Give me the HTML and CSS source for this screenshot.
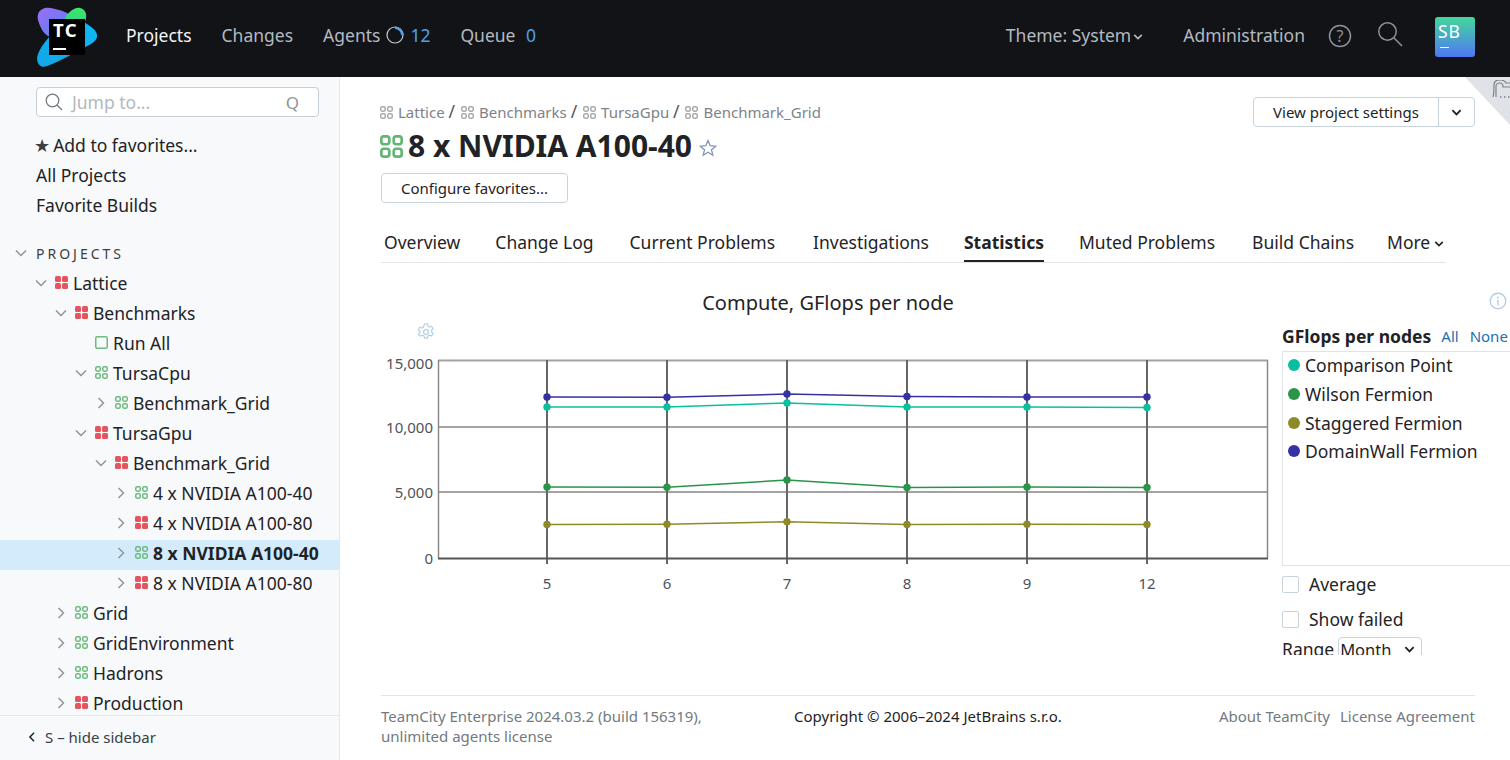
FILE: index.html
```html
<!DOCTYPE html>
<html lang="en">
<head>
  <meta charset="UTF-8">
  <title>8 x NVIDIA A100-40 - Statistics</title>
  <link rel="stylesheet" href="styles.css">
</head>
<body>
  <svg class="defs" width="0" height="0">
    <defs>
      <symbol id="grid-open" viewBox="0 0 13 13">
        <rect x="0.75" y="0.75" width="4.5" height="4.5" rx="1.4" fill="none" stroke="currentColor" stroke-width="1.5"/>
        <rect x="7.75" y="0.75" width="4.5" height="4.5" rx="1.4" fill="none" stroke="currentColor" stroke-width="1.5"/>
        <rect x="0.75" y="7.75" width="4.5" height="4.5" rx="1.4" fill="none" stroke="currentColor" stroke-width="1.5"/>
        <rect x="7.75" y="7.75" width="4.5" height="4.5" rx="1.4" fill="none" stroke="currentColor" stroke-width="1.5"/>
      </symbol>
      <symbol id="grid-fill" viewBox="0 0 13 13">
        <rect width="6" height="6" rx="1.5" fill="currentColor"/>
        <rect x="7" width="6" height="6" rx="1.5" fill="currentColor"/>
        <rect y="7" width="6" height="6" rx="1.5" fill="currentColor"/>
        <rect x="7" y="7" width="6" height="6" rx="1.5" fill="currentColor"/>
      </symbol>
      <symbol id="box-open" viewBox="0 0 13 13">
        <rect x="0.75" y="0.75" width="11.5" height="11.5" rx="1.5" fill="none" stroke="currentColor" stroke-width="1.5"/>
      </symbol>
      <symbol id="chev-down" viewBox="0 0 12 12">
        <path d="M1 3.5 6 8.5 11 3.5" fill="none" stroke="currentColor" stroke-width="1.4"/>
      </symbol>
      <symbol id="chev-right" viewBox="0 0 12 12">
        <path d="M3.5 1 8.5 6 3.5 11" fill="none" stroke="currentColor" stroke-width="1.4"/>
      </symbol>
      <symbol id="chev-bold" viewBox="0 0 12 12">
        <path d="M1.5 3.5 6 8 10.5 3.5" fill="none" stroke="currentColor" stroke-width="2"/>
      </symbol>
    </defs>
  </svg>

  <header class="topbar">
    <a class="logo">
      <svg width="60" height="60" viewBox="0 0 60 60">
        <defs>
          <linearGradient id="logo-purple" x1="0" y1="0" x2="1" y2="1">
            <stop offset="0" stop-color="#9f6bf5"/>
            <stop offset="1" stop-color="#3f8cf0"/>
          </linearGradient>
          <linearGradient id="logo-green" x1="0" y1="0" x2="0" y2="1">
            <stop offset="0" stop-color="#3bea62"/>
            <stop offset="1" stop-color="#2fc7a0"/>
          </linearGradient>
          <linearGradient id="logo-blue" x1="0" y1="1" x2="1" y2="0">
            <stop offset="0" stop-color="#12a6e8"/>
            <stop offset="1" stop-color="#0fb8f5"/>
          </linearGradient>
        </defs>
        <path d="M4 3C9-1 15 1 22 3c8 2 14 6 18 12 3 5 0 12-7 14-7 2-16 3-22 0C6 26 3 20 1 13 0 9 1 5 4 3Z" fill="url(#logo-purple)"/>
        <path d="M30 8c4-5 9-8 13-7 5 1 7 6 6 10-1 7-7 13-14 12-8-1-10-8-5-15Z" fill="url(#logo-green)"/>
        <path d="M10 59C3 62-2 55 1 47 5 37 14 27 26 17c7-6 16-6 24 0 6 4 11 8 10 13-1 4-5 7-10 9C37 46 24 54 10 59Z" fill="url(#logo-blue)"/>
        <rect x="12" y="12" width="36" height="36" fill="#000"/>
        <text x="16" y="29.5" class="logo-text">TC</text>
        <rect x="16" y="41" width="13" height="2" fill="#fff"/>
      </svg>
    </a>
    <nav class="nav-left">
      <a class="nav-link active">Projects</a>
      <a class="nav-link">Changes</a>
      <a class="nav-link agents">Agents
        <svg class="spinner" width="18" height="18" viewBox="0 0 18 18">
          <circle cx="9" cy="9" r="8" fill="none" stroke="#c7cdd3" stroke-width="1.2"/>
          <path d="M9 .5A8.5 8.5 0 0 1 17.5 9H15A6 6 0 0 0 9 3Z" fill="#4ea1ea"/>
        </svg>
        <span class="count">12</span></a>
      <a class="nav-link">Queue <span class="count queue-count">0</span></a>
    </nav>
    <nav class="nav-right">
      <a class="nav-link theme">Theme: System<svg width="10" height="10"><use href="#chev-bold"/></svg></a>
      <a class="nav-link admin">Administration</a>
      <svg class="help" width="24" height="24" viewBox="0 0 24 24">
        <circle cx="12" cy="12" r="10.5" fill="none" stroke="#8b9299" stroke-width="1.5"/>
        <text x="12" y="17.5" class="help-mark">?</text>
      </svg>
      <svg class="search" width="26" height="26" viewBox="0 0 26 26">
        <circle cx="10.5" cy="10.5" r="8.7" fill="none" stroke="#8b9299" stroke-width="1.5"/>
        <path d="M17 17 25 25" stroke="#8b9299" stroke-width="1.6"/>
      </svg>
      <div class="avatar">SB<i></i></div>
    </nav>
  </header>

  <div class="layout">
    <aside class="sidebar">
      <div class="jump">
        <svg width="18" height="18" viewBox="0 0 18 18">
          <circle cx="7.5" cy="7.5" r="6.3" fill="none" stroke="#737a80" stroke-width="1.3"/>
          <path d="M12 12 17 17" stroke="#737a80" stroke-width="1.3"/>
        </svg>
        <span class="jump-text">Jump to...</span>
        <span class="jump-key">Q</span>
      </div>

      <div class="fav-links">
        <a class="fav-star"><span class="star">★</span>Add to favorites...</a>
        <a>All Projects</a>
        <a>Favorite Builds</a>
      </div>

      <div class="tree-wrap">
        <div class="section-title">
          <svg class="chev" width="12" height="12"><use href="#chev-down"/></svg>
          PROJECTS
        </div>
        <ul class="tree">
          <li class="d0"><svg class="chev" width="12" height="12"><use href="#chev-down"/></svg><svg class="ico red" width="13" height="13"><use href="#grid-fill"/></svg>Lattice</li>
          <li class="d1"><svg class="chev" width="12" height="12"><use href="#chev-down"/></svg><svg class="ico red" width="13" height="13"><use href="#grid-fill"/></svg>Benchmarks</li>
          <li class="d2"><span class="chev-gap"></span><svg class="ico green" width="13" height="13"><use href="#box-open"/></svg>Run All</li>
          <li class="d2"><svg class="chev" width="12" height="12"><use href="#chev-down"/></svg><svg class="ico green" width="13" height="13"><use href="#grid-open"/></svg>TursaCpu</li>
          <li class="d3"><svg class="chev" width="12" height="12"><use href="#chev-right"/></svg><svg class="ico green" width="13" height="13"><use href="#grid-open"/></svg>Benchmark_Grid</li>
          <li class="d2"><svg class="chev" width="12" height="12"><use href="#chev-down"/></svg><svg class="ico red" width="13" height="13"><use href="#grid-fill"/></svg>TursaGpu</li>
          <li class="d3"><svg class="chev" width="12" height="12"><use href="#chev-down"/></svg><svg class="ico red" width="13" height="13"><use href="#grid-fill"/></svg>Benchmark_Grid</li>
          <li class="d4"><svg class="chev" width="12" height="12"><use href="#chev-right"/></svg><svg class="ico green" width="13" height="13"><use href="#grid-open"/></svg>4 x NVIDIA A100-40</li>
          <li class="d4"><svg class="chev" width="12" height="12"><use href="#chev-right"/></svg><svg class="ico red" width="13" height="13"><use href="#grid-fill"/></svg>4 x NVIDIA A100-80</li>
          <li class="d4 selected"><svg class="chev" width="12" height="12"><use href="#chev-right"/></svg><svg class="ico green" width="13" height="13"><use href="#grid-open"/></svg>8 x NVIDIA A100-40</li>
          <li class="d4"><svg class="chev" width="12" height="12"><use href="#chev-right"/></svg><svg class="ico red" width="13" height="13"><use href="#grid-fill"/></svg>8 x NVIDIA A100-80</li>
          <li class="d1"><svg class="chev" width="12" height="12"><use href="#chev-right"/></svg><svg class="ico green" width="13" height="13"><use href="#grid-open"/></svg>Grid</li>
          <li class="d1"><svg class="chev" width="12" height="12"><use href="#chev-right"/></svg><svg class="ico green" width="13" height="13"><use href="#grid-open"/></svg>GridEnvironment</li>
          <li class="d1"><svg class="chev" width="12" height="12"><use href="#chev-right"/></svg><svg class="ico green" width="13" height="13"><use href="#grid-open"/></svg>Hadrons</li>
          <li class="d1"><svg class="chev" width="12" height="12"><use href="#chev-right"/></svg><svg class="ico red" width="13" height="13"><use href="#grid-fill"/></svg>Production</li>
        </ul>
      </div>

      <div class="hide-sidebar">
        <svg width="10" height="10" viewBox="0 0 12 12"><path d="M8.5 1 3.5 6 8.5 11" fill="none" stroke="#1f2326" stroke-width="1.8"/></svg>
        S – hide sidebar
      </div>
    </aside>

    <main class="content">
      <div class="corner">
        <svg width="24" height="20" viewBox="0 0 24 20">
          <path d="M1 17C2 14 2 8 2 5 2 1 5 0 8 0c3 0 5 1 6 3h10M4 17V6c0-2 2-3 4-3 2 0 3 2 3 4h13" fill="none" stroke="#7d8389" stroke-width="1.2"/>
          <path d="M8 17h1.5M12 17h1.5M16 17h1.5" stroke="#7d8389" stroke-width="1.6"/>
        </svg>
      </div>

      <div class="head-row">
        <div class="crumbs">
          <svg class="crumb-ico" width="13" height="13"><use href="#grid-open"/></svg>Lattice <span class="sep">/</span>
          <svg class="crumb-ico" width="13" height="13"><use href="#grid-open"/></svg>Benchmarks <span class="sep">/</span>
          <svg class="crumb-ico" width="13" height="13"><use href="#grid-open"/></svg>TursaGpu <span class="sep">/</span>
          <svg class="crumb-ico" width="13" height="13"><use href="#grid-open"/></svg>Benchmark_Grid
        </div>
        <div class="split-btn">
          <button type="button" class="btn-main">View project settings</button>
          <button type="button" class="btn-arrow"><svg width="11" height="11"><use href="#chev-bold"/></svg></button>
        </div>
      </div>

      <h1 class="title">
        <svg class="title-ico" width="23" height="23"><use href="#grid-open"/></svg>
        8 x NVIDIA A100-40
        <svg class="title-star" width="18" height="18" viewBox="0 0 18 18">
          <path d="M9 1.6 11.2 6.7 16.7 7.2 12.5 10.8 13.8 16.2 9 13.3 4.2 16.2 5.5 10.8 1.3 7.2 6.8 6.7Z" fill="none" stroke="#7d94b8" stroke-width="1.3"/>
        </svg>
      </h1>

      <button type="button" class="btn-fav">Configure favorites...</button>

      <div class="tabs">
        <a>Overview</a>
        <a class="wide">Change Log</a>
        <a class="widest">Current Problems</a>
        <a>Investigations</a>
        <a class="on">Statistics</a>
        <a class="wider">Muted Problems</a>
        <a class="narrow">Build Chains</a>
        <a class="more">More<svg width="10" height="10"><use href="#chev-bold"/></svg></a>
      </div>

      <section class="stats">
        <div class="chart-col">
          <div class="chart-title">Compute, GFlops per node</div>
          <svg class="gear" width="18" height="18" viewBox="0 0 18 18">
            <path d="M7.5 1h3l.5 2.2 1.5.8 2.1-.8 1.5 2.6-1.6 1.5v1.6l1.6 1.5-1.5 2.6-2.1-.8-1.5.8-.5 2.2h-3l-.5-2.2-1.5-.8-2.100.8L1.300 11.400l1.600-1.500V8.300L1.300 6.800l1.500-2.600 2.100.8 1.500-.8Z" fill="none" stroke="#b4cfe8" stroke-width="1.2"/>
            <circle cx="9" cy="9" r="2.4" fill="none" stroke="#b4cfe8" stroke-width="1.2"/>
          </svg>
          <svg class="chart" width="890" height="250" viewBox="380 350 890 250">
            <g class="grid-h">
              <path d="M438 360.5H1268M438 427H1268M438 492H1268"/>
              <path d="M438.5 360V558M1267.5 360V558"/>
            </g>
            <g class="grid-v">
              <path d="M547 360V564M667 360V564M787 360V564M907 360V564M1027 360V564M1147 360V564"/>
            </g>
            <path class="axis" d="M438 558.5H1268"/>
            <g class="y-labels">
              <text x="433" y="368.5">15,000</text>
              <text x="433" y="433">10,000</text>
              <text x="433" y="498">5,000</text>
              <text x="433" y="563.5">0</text>
            </g>
            <g class="x-labels">
              <text x="547" y="588.5">5</text>
              <text x="667" y="588.5">6</text>
              <text x="787" y="588.5">7</text>
              <text x="907" y="588.5">8</text>
              <text x="1027" y="588.5">9</text>
              <text x="1147" y="588.5">12</text>
            </g>
            <g class="series" stroke="#0abf9f" fill="#0abf9f">
              <polyline points="547,407 667,407 787,403 907,407 1027,407 1147,407.5"/>
              <circle cx="547" cy="407" r="3.7"/><circle cx="667" cy="407" r="3.7"/><circle cx="787" cy="403" r="3.7"/><circle cx="907" cy="407" r="3.7"/><circle cx="1027" cy="407" r="3.7"/><circle cx="1147" cy="407.5" r="3.7"/>
            </g>
            <g class="series" stroke="#2a9548" fill="#2a9548">
              <polyline points="547,487 667,487.3 787,480 907,487.5 1027,487 1147,487.5"/>
              <circle cx="547" cy="487" r="3.7"/><circle cx="667" cy="487.3" r="3.7"/><circle cx="787" cy="480" r="3.7"/><circle cx="907" cy="487.5" r="3.7"/><circle cx="1027" cy="487" r="3.7"/><circle cx="1147" cy="487.5" r="3.7"/>
            </g>
            <g class="series" stroke="#8f8a28" fill="#8f8a28">
              <polyline points="547,524.5 667,524.3 787,521.7 907,524.5 1027,524.3 1147,524.5"/>
              <circle cx="547" cy="524.5" r="3.7"/><circle cx="667" cy="524.3" r="3.7"/><circle cx="787" cy="521.7" r="3.7"/><circle cx="907" cy="524.5" r="3.7"/><circle cx="1027" cy="524.3" r="3.7"/><circle cx="1147" cy="524.5" r="3.7"/>
            </g>
            <g class="series" stroke="#3630a5" fill="#3630a5">
              <polyline points="547,397 667,397.3 787,394 907,396.5 1027,397 1147,397"/>
              <circle cx="547" cy="397" r="3.7"/><circle cx="667" cy="397.3" r="3.7"/><circle cx="787" cy="394" r="3.7"/><circle cx="907" cy="396.5" r="3.7"/><circle cx="1027" cy="397" r="3.7"/><circle cx="1147" cy="397" r="3.7"/>
            </g>
          </svg>
        </div>

        <div class="legend-col">
          <svg class="info" width="18" height="18" viewBox="0 0 18 18">
            <circle cx="9" cy="9" r="7.8" fill="none" stroke="#b4cfe8" stroke-width="1.4"/>
            <circle cx="9" cy="5.5" r="1" fill="#b4cfe8"/>
            <path d="M9 8v5.5" stroke="#b4cfe8" stroke-width="1.5"/>
          </svg>
          <div class="legend-head"><b>GFlops per nodes</b><a>All</a><a>None</a></div>
          <ul class="legend">
            <li><i class="dot teal"></i>Comparison Point</li>
            <li><i class="dot green-d"></i>Wilson Fermion</li>
            <li><i class="dot olive"></i>Staggered Fermion</li>
            <li><i class="dot indigo"></i>DomainWall Fermion</li>
          </ul>
          <label class="check"><span class="box"></span>Average</label>
          <label class="check second"><span class="box"></span>Show failed</label>
          <div class="range">Range
            <span class="select">Month<svg width="11" height="11"><use href="#chev-bold"/></svg></span>
          </div>
        </div>
      </section>

      <footer class="footer">
        <div class="foot-left">TeamCity Enterprise 2024.03.2 (build 156319),<br>unlimited agents license</div>
        <div class="foot-mid">Copyright © 2006–2024 JetBrains s.r.o.</div>
        <div class="foot-right"><a>About TeamCity</a><a>License Agreement</a></div>
      </footer>
    </main>
  </div>
</body>
</html>
```

FILE: styles.css
```css
* {
  box-sizing: border-box;
}

html,
body {
  height: 100%;
}

body {
  margin: 0;
  overflow: hidden;
  background: #fff;
  color: #1f2326;
  font-family: "Noto Sans", Arial, sans-serif;
  font-size: 17.5px;
}

ul {
  list-style: none;
  margin: 0;
  padding: 0;
}

.defs {
  position: absolute;
}

/* top bar */
.topbar {
  height: 77px;
  display: flex;
  align-items: center;
  background: #121316;
  padding-left: 37px;
}

.logo {
  display: block;
  height: 60px;
  margin: -3px 29px 0 0;
}

.logo-text {
  font-family: "Noto Sans", sans-serif;
  font-weight: 700;
  font-size: 18.5px;
  letter-spacing: 1.5px;
  fill: #fff;
}

.nav-left,
.nav-right {
  display: flex;
  align-items: center;
}

.nav-left {
  gap: 30px;
  margin-top: -7px;
}

.nav-link {
  color: #b3bac1;
  line-height: 24px;
  white-space: nowrap;
}

.nav-link.active {
  color: #f2f4f6;
}

.agents,
.theme {
  display: flex;
  align-items: center;
}

.spinner {
  margin-left: 6px;
}

.count {
  color: #4ea1ea;
  margin-left: 6px;
}

.nav-right {
  margin-left: auto;
  padding-right: 35px;
}

.nav-right .nav-link {
  margin-top: -7px;
}

.theme svg {
  color: #b3bac1;
  margin: 3px 0 0 2px;
}

.admin {
  margin-left: 40px;
}

.help {
  margin: -5px 0 0 23px;
}

.help-mark {
  font-family: "Noto Sans", sans-serif;
  font-size: 16px;
  text-anchor: middle;
  fill: #8b9299;
}

.search {
  margin: -9px 0 0 25px;
}

.avatar {
  position: relative;
  width: 40px;
  height: 40px;
  margin: -3px 0 0 32px;
  padding: 3px 0 0 3px;
  border-radius: 3px;
  background: linear-gradient(#43d89a, #4f77f5);
  color: #fff;
  font-size: 17.5px;
  letter-spacing: 1px;
  line-height: 22px;
}

.avatar i {
  position: absolute;
  left: 5px;
  bottom: 9px;
  width: 9px;
  height: 1px;
  background: #fff;
}

/* page layout */
.layout {
  display: flex;
  height: calc(100vh - 77px);
}

.sidebar {
  width: 340px;
  flex: none;
  display: flex;
  flex-direction: column;
  background: #f7f9fa;
  border-right: 1px solid #e5e8eb;
}

.jump {
  display: flex;
  align-items: center;
  height: 30px;
  margin: 10px 20px 0 36px;
  padding: 0 19px 0 8px;
  background: #fff;
  border: 1px solid #c5d0da;
  border-radius: 4px;
  flex: none;
}

.jump-text {
  margin-left: 9px;
  color: #b4b8bc;
}

.jump-key {
  margin-left: auto;
  color: #8f9499;
  font-size: 17px;
}

.fav-links {
  flex: none;
  margin: 13px 0 0 36px;
}

.fav-links a {
  display: block;
  height: 30px;
  line-height: 30px;
}

.star {
  margin: 0 3px 0 -2px;
  font-size: 18px;
  line-height: 20px;
  color: #3a3f44;
  font-family: "DejaVu Sans", sans-serif;
}

.tree-wrap {
  flex: 1;
  min-height: 0;
  overflow: hidden;
  margin-top: 19px;
}

.section-title {
  display: flex;
  align-items: center;
  height: 30px;
  padding: 0 0 2px 15px;
  font-size: 14px;
  letter-spacing: 3px;
  color: #3a3f44;
}

.section-title .chev {
  margin-right: 9px;
}

.chev {
  color: #8d9297;
  flex: none;
}

.chev-gap {
  width: 12px;
  flex: none;
}

.tree {
  margin-top: 1px;
}

.tree li {
  display: flex;
  align-items: center;
  height: 30px;
  padding-bottom: 5px;
  white-space: nowrap;
}

.tree .chev,
.tree .chev-gap {
  margin-right: 8px;
}

.ico {
  flex: none;
  margin-right: 5px;
}

.red {
  color: #e5555f;
}

.green {
  color: #6dbb7f;
}

.d0 {
  padding-left: 35px;
}

.d1 {
  padding-left: 55px;
}

.d2 {
  padding-left: 75px;
}

.d3 {
  padding-left: 95px;
}

.d4 {
  padding-left: 115px;
}

.tree .selected {
  background: #d4ebfc;
  font-weight: 700;
}

.hide-sidebar {
  flex: none;
  display: flex;
  align-items: center;
  gap: 8px;
  height: 45px;
  padding: 0 0 2px 27px;
  border-top: 1px solid #e5e8eb;
  font-size: 15px;
  color: #3a3f44;
}

/* main column */
.content {
  position: relative;
  flex: 1;
  min-width: 0;
  overflow: hidden;
  padding: 20px 35px 0 41px;
}

.corner {
  position: absolute;
  top: 0;
  right: 0;
  width: 45px;
  height: 48px;
  background: #dfe3e8;
  clip-path: polygon(0 0, 100% 0, 100% 100%);
}

.corner svg {
  position: absolute;
  top: 3px;
  left: 27px;
}

.head-row {
  display: flex;
  align-items: flex-start;
  justify-content: space-between;
}

.crumbs {
  height: 30px;
  margin-left: -1px;
  line-height: 28px;
  color: #7d8389;
  font-size: 15px;
  white-space: nowrap;
}

.crumb-ico {
  color: #a6abb0;
  margin-right: 5px;
  vertical-align: -1px;
}

.sep {
  margin-right: 2px;
  color: #555;
  font-size: 17.5px;
}

.split-btn {
  display: flex;
  height: 30px;
  border: 1px solid #c9d3db;
  border-radius: 4px;
  background: #fff;
}

.btn-main,
.btn-arrow,
.btn-fav {
  font: inherit;
  font-size: 15px;
  background: none;
  border: 0;
  padding: 0;
  color: #1f2326;
}

.btn-main {
  width: 185px;
  border-right: 1px solid #c9d3db;
}

.btn-arrow {
  width: 35px;
  display: flex;
  align-items: center;
  justify-content: center;
}

.title {
  display: flex;
  align-items: center;
  height: 40px;
  margin: -1px 0 0 -1px;
  font-size: 30px;
  line-height: 40px;
  font-weight: 700;
  color: #1f2326;
  white-space: nowrap;
}

.title-ico {
  color: #62b572;
  margin-right: 5px;
}

.title-star {
  margin: 3px 0 0 7px;
}

.btn-fav {
  display: block;
  width: 187px;
  height: 30px;
  margin-top: 7px;
  border: 1px solid #c9d3db;
  border-radius: 4px;
}

.tabs {
  display: flex;
  width: 1065px;
  height: 43px;
  margin-top: 17px;
  padding-left: 3px;
  border-bottom: 1px solid #e1e4e7;
}

.tabs a {
  display: block;
  height: 42px;
  line-height: 44px;
  margin-right: 35px;
  white-space: nowrap;
}

.tabs a.wide {
  margin-right: 36px;
}

.tabs a.wider {
  margin-right: 37px;
}

.tabs a.widest {
  margin-right: 38px;
}

.tabs a.narrow {
  margin-right: 33px;
}

.tabs a.on {
  font-weight: 700;
  border-bottom: 2px solid #1f2326;
}

.tabs a.more {
  margin-right: 0;
}

.more svg {
  margin-left: 4px;
}

/* chart + legend */
.stats {
  display: flex;
  height: 432px;
  margin-right: -35px;
  padding-top: 25px;
  overflow: hidden;
}

.chart-col {
  position: relative;
  width: 901px;
  flex: none;
}

.chart-title {
  width: 894px;
  height: 30px;
  text-align: center;
  font-size: 20px;
  line-height: 30px;
}

.gear {
  display: block;
  margin: 5px 0 0 36px;
}

.chart {
  display: block;
  margin: 9px 0 0 -1px;
}

.grid-h path {
  fill: none;
  stroke: #a3a3a3;
  stroke-width: 2;
}

.grid-h path + path {
  stroke: #8a8a8a;
  stroke-width: 1.5;
}

.grid-v path {
  fill: none;
  stroke: #666;
  stroke-width: 2;
}

.axis {
  stroke: #555;
  stroke-width: 2;
  fill: none;
}

.y-labels text,
.x-labels text {
  font-family: "Noto Sans", sans-serif;
  font-size: 15px;
  fill: #4f5358;
}

.y-labels text {
  text-anchor: end;
}

.x-labels text {
  text-anchor: middle;
}

.series polyline {
  fill: none;
  stroke-width: 1.5;
}

.series circle {
  stroke: none;
}

.legend-col {
  position: relative;
  flex: 1;
  min-width: 0;
  overflow: hidden;
  height: 367px;
  padding-top: 34px;
}

.info {
  position: absolute;
  top: 4px;
  right: 3px;
}

.legend-head {
  height: 29px;
  padding-bottom: 2px;
  display: flex;
  align-items: center;
  white-space: nowrap;
}

.legend-head b {
  margin-right: 10px;
}

.legend-head a {
  color: #1a6fb8;
  font-size: 15px;
  margin-right: 11px;
}

.legend {
  width: 260px;
  height: 215px;
  padding-left: 5px;
  border: 1px solid #e1e4e7;
}

.legend li {
  display: flex;
  align-items: center;
  height: 28.7px;
  padding-bottom: 2px;
  white-space: nowrap;
}

.dot {
  width: 12px;
  height: 12px;
  margin-right: 5px;
  border-radius: 50%;
  flex: none;
}

.teal {
  background: #0abf9f;
}

.green-d {
  background: #2a9548;
}

.olive {
  background: #8f8a28;
}

.indigo {
  background: #3630a5;
}

.check {
  display: flex;
  align-items: center;
  height: 24px;
  margin-top: 6px;
}

.check.second {
  margin-top: 11px;
}

.box {
  width: 17px;
  height: 17px;
  margin-right: 10px;
  background: #fff;
  border: 1px solid #c9d3db;
  border-radius: 2px;
}

.range {
  display: flex;
  align-items: center;
  height: 24px;
  margin-top: 6px;
}

.select {
  display: flex;
  align-items: center;
  justify-content: space-between;
  width: 84px;
  height: 24px;
  margin-left: 4px;
  padding: 0 6px 0 1px;
  border: 1px solid #c9d3db;
  border-radius: 4px;
  font-size: 16.5px;
}

/* footer */
.footer {
  display: flex;
  padding-top: 10px;
  border-top: 1px solid #e1e4e7;
  font-size: 15px;
  line-height: 20px;
}

.foot-left {
  width: 413px;
  color: #737a80;
}

.foot-right {
  margin-left: auto;
  color: #737a80;
}

.foot-right a {
  margin-left: 10px;
}
```
